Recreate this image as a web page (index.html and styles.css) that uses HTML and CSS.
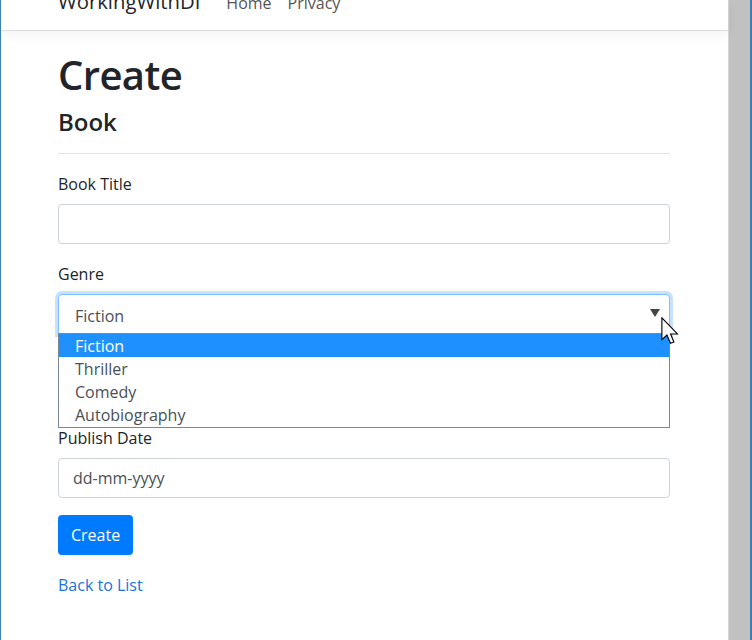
FILE: index.html
```html
<!DOCTYPE html>
<html>
<head>
<meta charset="utf-8">
<link rel="stylesheet" href="styles.css">
</head>
<body>
<div class="window">
  <div class="page">
    <header class="navbar">
      <div class="nav-inner">
        <a class="brand">WorkingWithDI</a>
        <a class="nav-link">Home</a>
        <a class="nav-link">Privacy</a>
      </div>
    </header>
    <main class="content">
      <h1 class="title">Create</h1>
      <h4 class="subtitle">Book</h4>
      <hr class="divider">
      <div class="group">
        <label class="label">Book Title</label>
        <div class="input"></div>
      </div>
      <div class="group group-genre">
        <label class="label">Genre</label>
        <div class="select">
          <span class="select-value">Fiction</span>
          <span class="arrow"></span>
          <ul class="dropdown">
            <li class="option selected">Fiction</li>
            <li class="option">Thriller</li>
            <li class="option">Comedy</li>
            <li class="option">Autobiography</li>
          </ul>
          <svg class="cursor" width="19" height="28" viewBox="0 0 13.5 20"><path d="M0.6 0.6 L0.6 16.2 L4.2 12.9 L6.7 18.8 L9.2 17.8 L6.8 12.1 L11.7 12.1 Z" fill="#fff" stroke="#000" stroke-width="0.8" stroke-linejoin="miter"/></svg>
        </div>
      </div>
      <div class="group">
        <label class="label">Publish Date</label>
        <div class="input"><span class="placeholder">dd-mm-yyyy</span></div>
      </div>
      <button class="btn">Create</button>
      <div class="back"><a class="link">Back to List</a></div>
    </main>
  </div>
  <div class="scrollbar"></div>
</div>
</body>
</html>
```
FILE: styles.css
```css
html, body {
  margin: 0;
  padding: 0;
  height: 100%;
  background: #fff;
}
body {
  font-family: "Segoe UI", "Open Sans", "Noto Sans", sans-serif;
  color: #212529;
}
.window {
  display: flex;
  height: 640px;
  border-left: 1px solid #3a80b5;
  border-right: 2px solid #3a80b5;
  box-sizing: border-box;
  overflow: hidden;
}
.page {
  flex: 1;
  background: #fff;
}
.scrollbar {
  width: 21px;
  background: #c1c1c1;
  border-left: 1px solid #d6d6d6;
}
.navbar {
  height: 30px;
  border-bottom: 1px solid #dedede;
  box-shadow: 0 4px 12px rgba(0,0,0,0.05);
  overflow: hidden;
  position: relative;
}
.nav-inner {
  display: flex;
  align-items: baseline;
  margin-left: 57px;
  margin-top: -14px;
  line-height: 30px;
}
.brand {
  font-size: 20.3px;
  color: #212529;
  margin-right: 26px;
}
.nav-link {
  font-size: 16px;
  color: #555;
  margin-right: 16px;
}
.content {
  margin-left: 57px;
  width: 612px;
}
.title {
  font-size: 40px;
  font-weight: 600;
  letter-spacing: -0.6px;
  line-height: 48px;
  margin: 20px 0 0;
}
.subtitle {
  font-size: 24px;
  font-weight: 600;
  line-height: 30px;
  margin: 8px 0 0;
}
.divider {
  border: 0;
  border-top: 1px solid #e3e3e3;
  margin: 16px 0 0;
}
.group {
  margin-top: 18px;
}
.label {
  display: block;
  font-size: 16px;
  line-height: 24px;
  margin-bottom: 8px;
}
.input, .select {
  height: 40px;
  box-sizing: border-box;
  border: 1px solid #ced4da;
  border-radius: 4px;
  background: #fff;
  display: flex;
  align-items: center;
  font-size: 16px;
}
.placeholder {
  margin-left: 14px;
  color: #495057;
}
.select {
  position: relative;
  border-color: #80bdff;
  box-shadow: 0 0 0 3px rgba(0,123,255,0.22);
  border-radius: 4px 4px 0 0;
}
.select-value {
  margin-left: 16px;
  padding-top: 3px;
  color: #495057;
}
.arrow {
  position: absolute;
  right: 9px;
  top: 14px;
  width: 0;
  height: 0;
  border-left: 5px solid transparent;
  border-right: 5px solid transparent;
  border-top: 8px solid #444;
}
.dropdown {
  position: absolute;
  left: -1px;
  right: -1px;
  top: 38px;
  margin: 0;
  padding: 0 0 1px;
  list-style: none;
  background: #fff;
  border: 1px solid #7a8896;
  z-index: 2;
}
.option {
  height: 23px;
  line-height: 24px;
  padding-left: 16px;
  font-size: 16px;
  color: #495057;
}
.option.selected {
  background: #1e90ff;
  color: #fff;
}
.cursor {
  position: absolute;
  right: -11px;
  top: 22px;
  z-index: 3;
}
.group-genre + .group {
  margin-top: 92px;
}
.btn {
  display: block;
  margin-top: 17px;
  height: 40px;
  padding: 0 13px;
  background: #007bff;
  border: 0;
  border-radius: 4px;
  color: #fff;
  font-family: inherit;
  font-size: 16px;
}
.back {
  margin-top: 18px;
  line-height: 24px;
  font-size: 16px;
}
.link {
  color: #1a73d9;
}
```
